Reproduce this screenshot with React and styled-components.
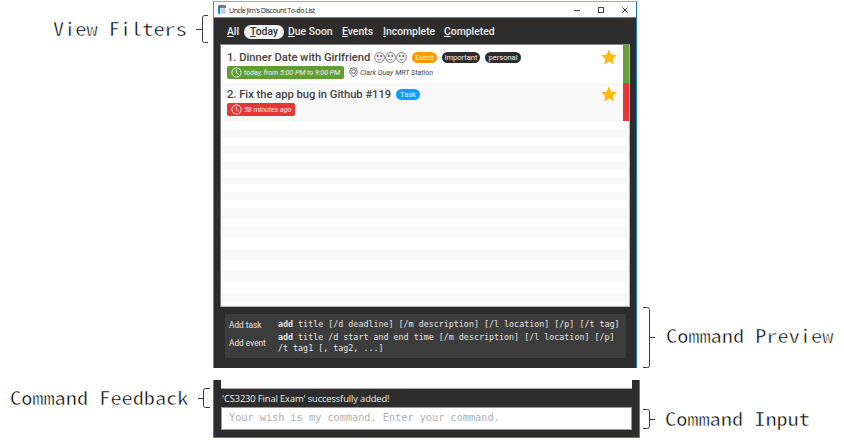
import React from "react";
import styled, { createGlobalStyle } from "styled-components";

const Global = createGlobalStyle`
  *{box-sizing:border-box}
  body{margin:0;background:#fff;font-family:Roboto,"Liberation Sans",sans-serif;overflow:hidden}
  svg{display:block;flex:none}
`;
const Page = styled.main`
  display:grid;grid-template-columns:213px 427px 204px;width:844px;height:440px;white-space:nowrap;
`;
const Side = styled.aside`display:flex;flex-direction:column;`;
const Center = styled.div`display:flex;flex-direction:column;align-items:flex-start;padding-top:1px;`;
const Callout = styled.div`
  display:flex;align-items:center;height:${p => p.$h}px;margin-top:${p => p.$top}px;
  padding-left:${p => p.$left}px;gap:${p => p.$gap}px;
`;
const CalloutText = styled.span`
  width:${p => p.$w}px;padding-bottom:${p => p.$pb || 2}px;
  font:300 18.4px/24px "Noto Sans Mono CJK SC","Noto Sans Mono CJK JP","Liberation Mono",monospace;
  color:#000;-webkit-text-stroke:.45px #fff;transform:scaleX(1.213);transform-origin:left center;
`;
const Window = styled.section`
  width:424px;height:367px;background:#2d2d2d;border-left:1px solid #2b9fe0;border-right:1px solid #0f83d3;
  border-top:1px solid #74bdeb;display:flex;flex-direction:column;
`;
const TitleBar = styled.header`
  height:16px;background:#fff;border-bottom:1px solid #3f93c4;display:flex;align-items:center;padding:0 7px 0 4px;
  font:400 7.1px/14px "Open Sans","Noto Sans",sans-serif;color:#222;
`;
const TitleText = styled.span`margin-left:3px;letter-spacing:-.49px;flex:1;`;
const Controls = styled.div`display:flex;gap:16px;`;
const Filters = styled.nav`
  display:flex;align-items:center;height:26px;padding:1px 0 0 8px;
`;
const Filter = styled.span`
  height:14px;line-height:14px;font-size:10.4px;font-weight:500;border-radius:7px;text-align:center;
  width:${p => p.$w}px;margin-right:${p => p.$mr}px;
  color:${p => (p.$on ? "#333" : "#eee")};background:${p => (p.$on ? "#f5f5f5" : "transparent")};
`;
const Key = styled.u`text-underline-offset:1px;text-decoration-thickness:1px;`;
const List = styled.div`
  width:410px;height:263px;margin-left:6px;background:#fff;border:1px solid #b5b5b5;border-top-color:#888;border-left-color:#777;
`;
const Row = styled.article`
  height:38px;display:flex;background:${p => p.$bg};border-right:6px solid ${p => p.$bar};padding-left:6px;
`;
const RowBody = styled.div`flex:1;padding-top:${p => p.$pt}px;`;
const Line = styled.div`display:flex;align-items:center;height:${p => p.$h}px;`;
const Heading = styled.h2`
  margin:0;font-size:11.2px;font-weight:500;line-height:17px;color:#444;letter-spacing:-.02px;width:${p => p.$w}px;
`;
const Faces = styled.span`display:flex;margin-right:5px;`;
const Tag = styled.span`
  height:11px;line-height:11px;border-radius:6px;text-align:center;font-size:7.5px;color:#f2f2f2;
  background:${p => p.$bg};width:${p => p.$w}px;margin-right:5px;
`;
const Badge = styled.span`
  height:13px;width:${p => p.$w}px;border-radius:2px;background:${p => p.$bg};color:#f3f3f3;display:flex;align-items:center;
  gap:2px;padding-left:4px;font-size:7.2px;font-style:italic;letter-spacing:-.05px;
`;
const Place = styled.span`
  display:flex;align-items:center;gap:2px;margin-left:5px;font-size:7.2px;font-style:italic;color:#444;
`;
const StarCell = styled.div`width:22px;padding-top:${p => p.$pt}px;`;
const Stripe = styled.div`height:${p => p.$h}px;margin:0 2px 0 1px;background:${p => (p.$g ? "#f8f8f8" : "#fff")};`;
const Preview = styled.div`
  margin:7px 0 0 11px;width:401px;height:44px;background:#3d3d3d;color:#e4e4e4;padding:5px 0 0 4px;
  display:grid;grid-template-columns:49px 1fr;grid-template-rows:11px 24px;align-items:center;row-gap:1px;
`;
const PreviewName = styled.span`font-size:8.3px;`;
const Code = styled.code`
  display:flex;flex-direction:column;font:400 8.36px/11px "DejaVu Sans Mono","Liberation Mono",monospace;
`;
const Bottom = styled.section`
  width:427px;height:58px;margin-top:12px;background:#2d2d2d;border:solid #4385a9;border-width:0 1px 1px;
  display:flex;flex-direction:column;padding:0 7px;
`;
const ListEnd = styled.div`height:9px;background:#fff;border-bottom:1px solid #aaa;`;
const Feedback = styled.p`
  margin:0;height:18px;padding-left:1px;font:400 9.3px/20px "Open Sans","Noto Sans",sans-serif;color:#ececec;letter-spacing:-.1px;
`;
const Input = styled.div`
  height:23px;background:#fff;border:1px solid #999;padding-left:7px;
  font:400 10.22px/19px "DejaVu Sans Mono","Liberation Mono",monospace;color:#b0b0b0;
`;

const Bracket = ({ h, w = 12, flip, tick, spine }) => (
  <svg width={w} height={h} viewBox={`0 0 ${w} ${h}`} fill="none" stroke="#3a3a3a" strokeWidth="1">
    {flip
      ? <path d={`M0 .5H${spine - 2}Q${spine} .5 ${spine} 2.5V${h - 2.5}Q${spine} ${h - .5} ${spine - 2} ${h - .5}H0M${spine} ${tick}H${w}`} />
      : <path d={`M${w} .5H${spine + 2}Q${spine} .5 ${spine} 2.5V${h - 2.5}Q${spine} ${h - .5} ${spine + 2} ${h - .5}H${w}M0 ${tick}H${spine}`} />}
  </svg>
);
const Clock = () => (
  <svg width="11" height="11" viewBox="0 0 11 11" fill="none" stroke="#fff" strokeWidth=".9">
    <circle cx="5.5" cy="5.5" r="4.6" /><path d="M5.3 2.7V5.6L7.5 7.5" />
  </svg>
);
const Pin = () => (
  <svg width="9" height="11" viewBox="0 0 9 11" fill="none" stroke="#555" strokeWidth=".9">
    <path d="M4.5 10C3.6 8.4.7 7 .7 4.5a3.8 3.8 0 0 1 7.6 0C8.3 7 5.4 8.4 4.5 10Z" /><circle cx="4.5" cy="4.4" r="1.9" />
  </svg>
);
const Face = () => (
  <svg width="11" height="11" viewBox="0 0 11 11" fill="none" stroke="#555" strokeWidth=".75">
    <circle cx="5.5" cy="5.5" r="4.9" /><path d="M3.6 7.3Q5.5 8.6 7.4 7.3" />
    <circle cx="3.7" cy="4" r=".7" fill="#333" /><circle cx="7.3" cy="4" r=".7" fill="#333" />
  </svg>
);
const Star = () => (
  <svg width="16" height="16" viewBox="0 0 16 16">
    <path fill="#ffb90a" d="M8 .5 10.3 5.6 15.8 6.2 11.7 9.9 12.9 15.4 8 12.6 3.1 15.4 4.3 9.9.2 6.2 5.7 5.6Z" />
  </svg>
);
const AppIcon = () => (
  <svg width="8" height="9" viewBox="0 0 8 9">
    <rect width="8" height="9" rx="1.5" fill="#1787c9" /><rect x="2" y="3" width="6" height="6" fill="#e8eef2" />
    <path d="M2 5H8M2 7H8M4 3V9M6 3V9" stroke="#91aabb" strokeWidth=".5" /><path d="M2 2H7" stroke="#e46a55" />
  </svg>
);

const filters = [["All", 22, 0], ["Today", 40, 4], ["Due Soon", 44, 10], ["Events", 31, 10], ["Incomplete", 51, 10], ["Completed", 48, 0]];
const stripes = [8, 8, 7.5, 8, 8, 8, 8, 7.5, 8, 8, 8, 11, 8, 11, 11, 11, 11, 11, 11, 8];

export default function App() {
  return (
    <>
      <Global />
      <Page>
        <Side>
          <Callout $top={15} $h={28} $left={53} $gap={9}>
            <CalloutText $w={134}>View Filters</CalloutText><Bracket h={28} spine={6.5} tick={14.5} />
          </Callout>
          <Callout $top={345} $h={20} $left={10} $gap={9}>
            <CalloutText $w={179}>Command Feedback</CalloutText><Bracket h={20} spine={5.5} tick={10.5} />
          </Callout>
        </Side>
        <Center>
          <Window>
            <TitleBar>
              <AppIcon /><TitleText>Uncle Jim's Discount To-do List</TitleText>
              <Controls>
                <svg width="8" height="8"><path d="M1 4.5H7" stroke="#444" /></svg>
                <svg width="8" height="8"><rect x="1.5" y="1.5" width="5" height="5" fill="none" stroke="#444" /></svg>
                <svg width="8" height="8"><path d="M1.5 1.5 6.5 6.5M6.5 1.5 1.5 6.5" stroke="#333" /></svg>
              </Controls>
            </TitleBar>
            <Filters>
              {filters.map(([t, w, mr], i) => (
                <Filter key={t} $w={w} $mr={mr} $on={i === 1}><Key>{t[0]}</Key>{t.slice(1)}</Filter>
              ))}
            </Filters>
            <List>
              <Row $bg="#fff" $bar="#66a037">
                <RowBody $pt={4}>
                  <Line $h={17}>
                    <Heading $w={147}>1. Dinner Date with Girlfriend</Heading>
                    <Faces><Face /><Face /><Face /></Faces>
                    <Tag $bg="#ff9800" $w={25}>Event</Tag><Tag $bg="#2d2d2d" $w={38}>important</Tag><Tag $bg="#2d2d2d" $w={36}>personal</Tag>
                  </Line>
                  <Line $h={13}>
                    <Badge $bg="#5f9e31" $w={117}><Clock />today, from 5:00 PM to 9:00 PM</Badge>
                    <Place><Pin />Clark Quay MRT Station</Place>
                  </Line>
                </RowBody>
                <StarCell $pt={4}><Star /></StarCell>
              </Row>
              <Row $bg="#f8f8f8" $bar="#e83535">
                <RowBody $pt={3}>
                  <Line $h={17}>
                    <Heading $w={169}>2. Fix the app bug in Github #119</Heading><Tag $bg="#0d9dfb" $w={24}>Task</Tag>
                  </Line>
                  <Line $h={13}><Badge $bg="#e83535" $w={68}><Clock />58 minutes ago</Badge></Line>
                </RowBody>
                <StarCell $pt={3}><Star /></StarCell>
              </Row>
              {stripes.map((h, i) => <Stripe key={i} $h={h} $g={i % 2 === 1} />)}
            </List>
            <Preview>
              <PreviewName>Add task</PreviewName>
              <Code><span><b>add</b>{" title [/d deadline] [/m description] [/l location] [/p] [/t tag]"}</span></Code>
              <PreviewName>Add event</PreviewName>
              <Code>
                <span><b>add</b>{" title /d start and end time [/m description] [/l location] [/p]"}</span>
                <span>/t tag1 [, tag2, ...]</span>
              </Code>
            </Preview>
          </Window>
          <Bottom>
            <ListEnd />
            <Feedback>'CS3230 Final Exam' successfully added!</Feedback>
            <Input>Your wish is my command. Enter your command.</Input>
          </Bottom>
        </Center>
        <Side>
          <Callout $top={307} $h={61} $left={3} $gap={11}>
            <Bracket h={61} flip spine={6.5} tick={30.5} /><CalloutText $w={168} $pb={5}>Command Preview</CalloutText>
          </Callout>
          <Callout $top={41} $h={20} $left={3} $gap={10}>
            <Bracket h={20} flip spine={6.5} tick={10.5} /><CalloutText $w={146}>Command Input</CalloutText>
          </Callout>
        </Side>
      </Page>
    </>
  );
}
